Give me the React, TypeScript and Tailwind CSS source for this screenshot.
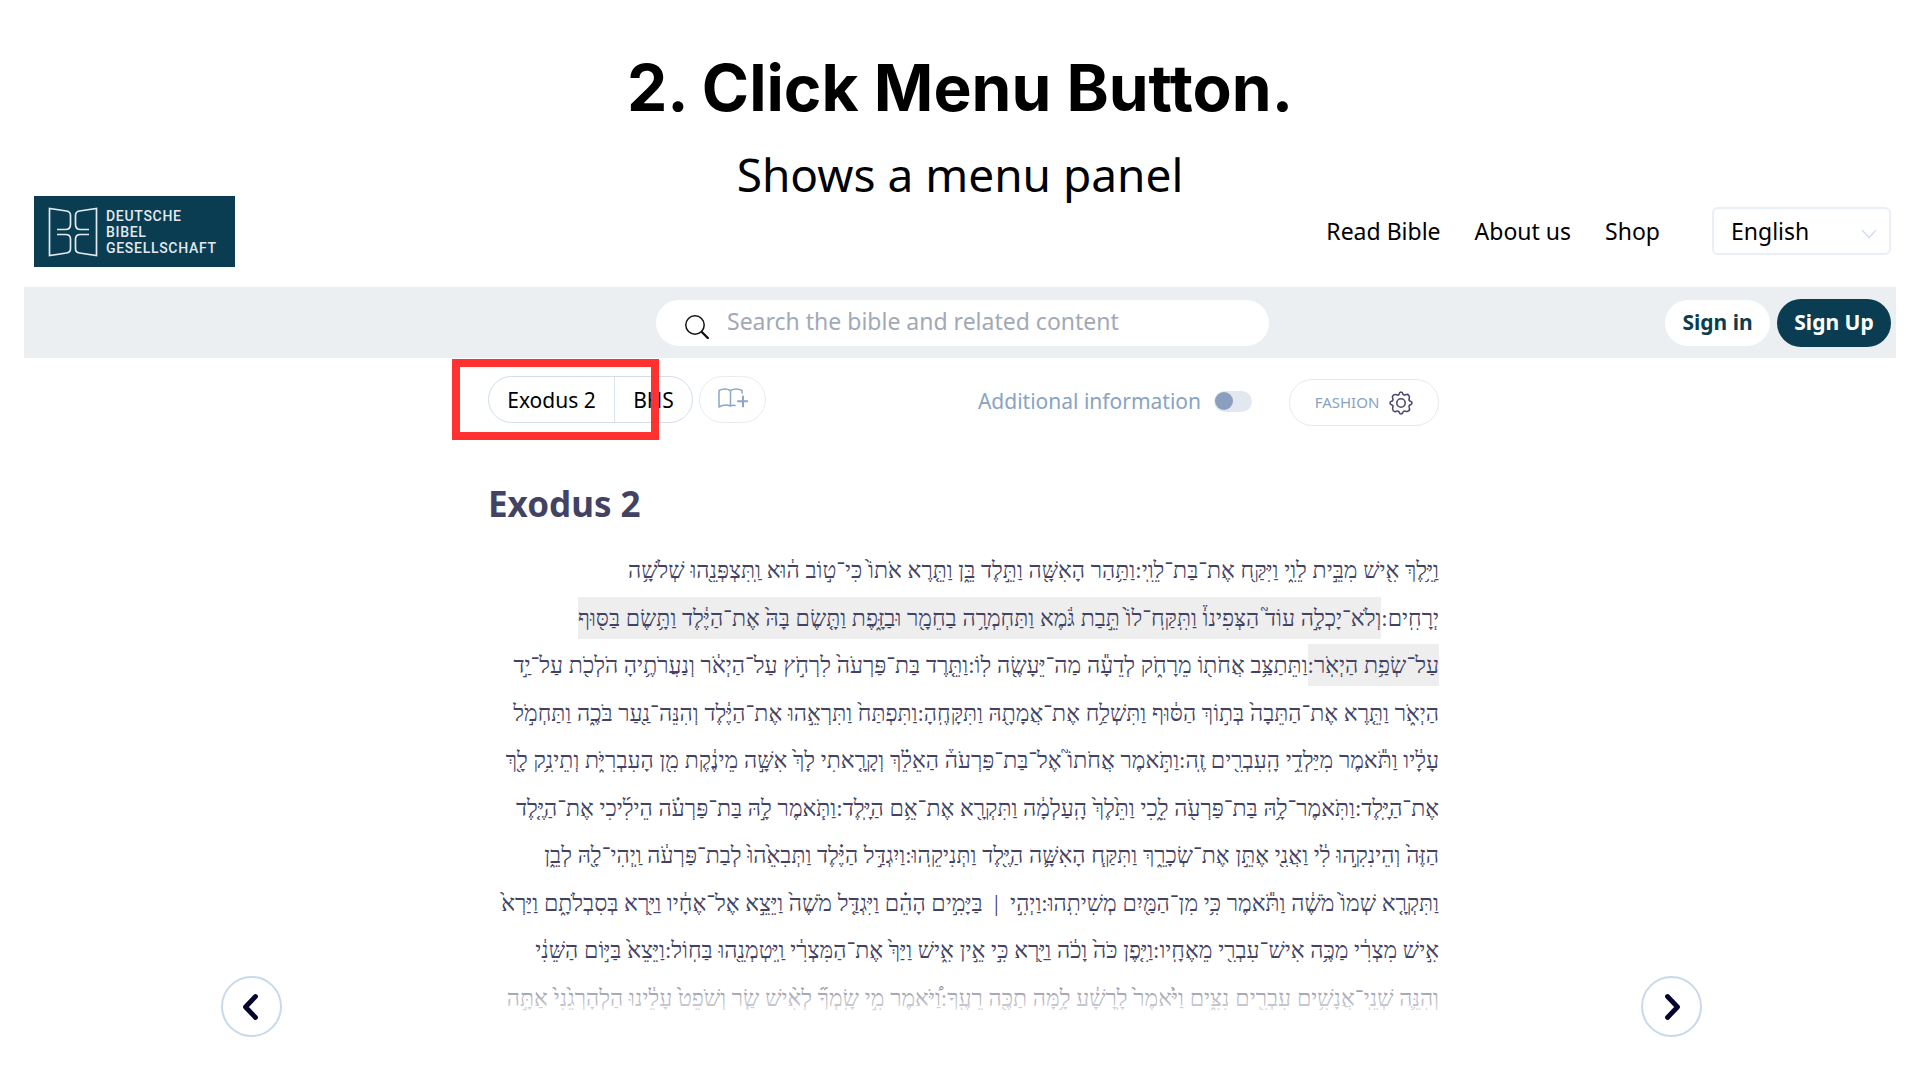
import React from "react";

type Segment = { text: string; marked?: boolean };

const lines: Segment[][] = [
  [{ text: "וַיֵּ֥לֶךְ אִ֖ישׁ מִבֵּ֣ית לֵוִ֑י וַיִּקַּ֖ח אֶת־בַּת־לֵוִֽי:וַתַּ֥הַר הָאִשָּׁ֖ה וַתֵּ֣לֶד בֵּ֑ן וַתֵּ֤רֶא אֹתוֹ֙ כִּי־ט֣וֹב ה֔וּא וַֽתִּצְפְּנֵ֖הוּ שְׁלֹשָׁ֥ה" }],
  [
    { text: "יְרָחִֽים:" },
    { text: "וְלֹא־יָכְלָ֣ה עוֹד֮ הַצְּפִינוֹ֒ וַתִּֽקַּֽח־לוֹ֙ תֵּ֣בַת גֹּ֔מֶא וַתַּחְמְרָ֥ה בַחֵמָ֖ר וּבַזָּ֑פֶת וַתָּ֤שֶׂם בָּהּ֙ אֶת־הַיֶּ֔לֶד וַתָּ֥שֶׂם בַּסּ֖וּף", marked: true },
  ],
  [
    { text: "עַל־שְׂפַ֥ת הַיְאֹֽר:", marked: true },
    { text: "וַתֵּתַצַּ֥ב אֲחֹת֖וֹ מֵרָחֹ֑ק לְדֵעָ֕ה מַה־יֵּעָשֶׂ֖ה לֽוֹ:וַתֵּ֤רֶד בַּת־פַּרְעֹה֙ לִרְחֹ֣ץ עַל־הַיְאֹ֔ר וְנַעֲרֹתֶ֥יהָ הֹלְכֹ֖ת עַל־יַ֣ד" },
  ],
  [{ text: "הַיְאֹ֑ר וַתֵּ֤רֶא אֶת־הַתֵּבָה֙ בְּת֣וֹךְ הַסּ֔וּף וַתִּשְׁלַ֥ח אֶת־אֲמָתָ֖הּ וַתִּקָּחֶֽהָ:וַתִּפְתַּח֙ וַתִּרְאֵ֣הוּ אֶת־הַיֶּ֔לֶד וְהִנֵּה־נַ֖עַר בֹּכֶ֑ה וַתַּחְמֹ֣ל" }],
  [{ text: "עָלָ֔יו וַתֹּ֕אמֶר מִיַּלְדֵ֥י הָֽעִבְרִ֖ים זֶֽה:וַתֹּ֣אמֶר אֲחֹתוֹ֮ אֶל־בַּת־פַּרְעֹה֒ הַאֵלֵ֗ךְ וְקָרָ֤אתִי לָךְ֙ אִשָּׁ֣ה מֵינֶ֔קֶת מִ֖ן הָעִבְרִיֹּ֑ת וְתֵינִ֥ק לָ֖ךְ" }],
  [{ text: "אֶת־הַיָּֽלֶד:וַתֹּֽאמֶר־לָ֥הּ בַּת־פַּרְעֹ֖ה לֵ֑כִי וַתֵּ֙לֶךְ֙ הָֽעַלְמָ֔ה וַתִּקְרָ֖א אֶת־אֵ֥ם הַיָּֽלֶד:וַתֹּ֧אמֶר לָ֣הּ בַּת־פַּרְעֹ֗ה הֵילִ֜יכִי אֶת־הַיֶּ֤לֶד" }],
  [{ text: "הַזֶּה֙ וְהֵינִקִ֣הוּ לִ֔י וַאֲנִ֖י אֶתֵּ֣ן אֶת־שְׂכָרֵ֑ךְ וַתִּקַּ֧ח הָאִשָּׁ֛ה הַיֶּ֖לֶד וַתְּנִיקֵֽהוּ:וַיִגְדַּ֣ל הַיֶּ֗לֶד וַתְּבִאֵ֙הוּ֙ לְבַת־פַּרְעֹ֔ה וַֽיְהִי־לָ֖הּ לְבֵ֑ן" }],
  [{ text: "וַתִּקְרָ֤א שְׁמוֹ֙ מֹשֶׁ֔ה וַתֹּ֕אמֶר כִּ֥י מִן־הַמַּ֖יִם מְשִׁיתִֽהוּ:וַיְהִ֣י\u00a0 |\u00a0 בַּיָּמִ֣ים הָהֵ֗ם וַיִּגְדַּ֤ל מֹשֶׁה֙ וַיֵּצֵ֣א אֶל־אֶחָ֔יו וַיַּ֖רְא בְּסִבְלֹתָ֑ם וַיַּרְא֙" }],
  [{ text: "אִ֣ישׁ מִצְרִ֔י מַכֶּ֥ה אִישׁ־עִבְרִ֖י מֵאֶחָֽיו:וַיִּ֤פֶן כֹּה֙ וָכֹ֔ה וַיַּ֖רְא כִּ֣י אֵ֣ין אִ֑ישׁ וַיַּךְ֙ אֶת־הַמִּצְרִ֔י וַֽיִּטְמְנֵ֖הוּ בַּחֽוֹל:וַיֵּצֵא֙ בַּיּ֣וֹם הַשֵּׁנִ֔י" }],
  [{ text: "וְהִנֵּ֛ה שְׁנֵֽי־אֲנָשִׁ֥ים עִבְרִ֖ים נִצִּ֑ים וַיֹּ֙אמֶר֙ לָֽרָשָׁ֔ע לָ֥מָּה תַכֶּ֖ה רֵעֶֽךָ:וַ֠יֹּאמֶר מִ֣י שָֽׂמְךָ֞ לְאִ֨ישׁ שַׂ֤ר וְשֹׁפֵט֙ עָלֵ֔ינוּ הַלְהָרְגֵ֙נִי֙ אַתָּ֣ה" }],
];

function Logo() {
  return (
    <a href="#home" aria-label="Deutsche Bibel Gesellschaft" className="mt-px flex h-[71px] w-[201px] items-center gap-2 bg-[#0a3d52] pl-[14px]">
      <svg viewBox="0 0 50 50" className="h-[50px] w-[50px] shrink-0" fill="none" stroke="#e2eaed" strokeWidth="1.7">
        <path d="M9 22.5h8.500q5 0 5-5V8.500q0-4-4-4.500L1.500 1.500v47L18.500 46q4-.5 4-4.500V32q0-4.500-5-4.500H9" />
        <path d="M41 22.500h-8.500q-5 0-5-5V8.500q0-4 4-4.500L48.500 1.500v47L31.500 46q-4-.5-4-4.500V32q0-4.500 5-4.500H41" />
      </svg>
      <span className="font-['Roboto'] text-[14px] leading-4 font-medium tracking-wider text-[#e2eaed]">
        DEUTSCHE<br />BIBEL<br />GESELLSCHAFT
      </span>
    </a>
  );
}

function SearchIcon() {
  return (
    <svg viewBox="0 0 24 24" className="h-6 w-6 shrink-0" fill="none" stroke="#111" strokeLinecap="round">
      <circle cx="10" cy="10" r="9.200" strokeWidth="1.500" />
      <path d="M16.800 17l6 6" strokeWidth="2.400" />
    </svg>
  );
}

function BookPlusIcon() {
  return (
    <svg viewBox="0 0 30 20" className="h-5 w-[30px]" fill="none" stroke="#8ba6c6" strokeWidth="1.500" strokeLinecap="round" strokeLinejoin="round">
      <path d="M12.500 2.500Q7 -.5 1 2.500V19Q7 15.500 12.500 18Q15 17 17 17.500M12.500 2.500Q18 -.5 24 2.500V5M12.500 2.500V18" />
      <path d="M25 8.500v10M20 13.300h9.500" strokeWidth="2" />
    </svg>
  );
}

function GearIcon() {
  return (
    <svg viewBox="0 0 24 24" className="h-6 w-6" fill="none" stroke="#4d4b6b" strokeWidth="1.600" strokeLinejoin="round">
      <circle cx="12" cy="12" r="4.200" />
      <path d="M10 3.300Q10.500 1 12 1T14 3.300Q15 4.500 16.500 3.800Q18.500 2.800 19.700 4.200T20.200 7.500Q19.500 9.300 21 10Q23 10.500 23 12T20.800 14Q19.500 15 20.200 16.500Q21.200 18.500 19.800 19.700T16.500 20.200Q14.700 19.500 14 21Q13.500 23 12 23T10 20.800Q9 19.500 7.500 20.200Q5.500 21.200 4.300 19.800T3.800 16.500Q4.500 14.700 3 14Q1 13.500 1 12T3.200 10Q4.500 9 3.800 7.500Q2.800 5.500 4.200 4.300T7.500 3.800Q9.300 4.500 10 3.300Z" />
    </svg>
  );
}

function PageButton({ label, path }: { label: string; path: string }) {
  return (
    <button aria-label={label} className="flex h-[61px] w-[61px] shrink-0 items-center justify-center rounded-full border-2 border-[#c9d9ec] bg-white">
      <svg viewBox="0 0 28 28" className="h-7 w-7" fill="none" stroke="#04042f" strokeWidth="4.800" strokeLinecap="round" strokeLinejoin="round">
        <path d={path} />
      </svg>
    </button>
  );
}

export default function App() {
  return (
    <div className="min-h-screen bg-white px-6 font-['Noto_Sans',sans-serif] text-black">
      <div className="flex h-[195px] flex-col items-center pt-[50px]">
        <h1 className="font-['Inter'] text-[64px] leading-[76px] font-bold whitespace-nowrap">2. Click Menu Button.</h1>
        <p className="mt-4 text-[46px] leading-[64px] whitespace-nowrap">Shows a menu panel</p>
      </div>

      <header className="flex h-[92px] items-start justify-between pr-[5px] pl-[10px]">
        <Logo />
        <div className="flex items-center pt-3">
          <nav className="mr-[52px] flex gap-[34px] text-[23px] leading-[48px]">
            <a href="#read">Read Bible</a>
            <a href="#about">About us</a>
            <a href="#shop">Shop</a>
          </nav>
          <div className="relative">
            <select aria-label="Language" defaultValue="English" className="h-12 w-[179px] appearance-none rounded-md border-2 border-[#eaeff6] bg-white pl-[17px] text-[23px]">
              <option>English</option>
            </select>
            <svg viewBox="0 0 16 10" className="pointer-events-none absolute top-[22px] right-[14px] h-[10px] w-4" fill="none" stroke="#d3e0ee" strokeWidth="1.600">
              <path d="M1 1l7 7.500L15 1" />
            </svg>
          </div>
        </div>
      </header>

      <div className="grid h-[71px] grid-cols-[1fr_613px_1fr] items-center bg-[#ebeff2] pl-[5px]">
        <div />
        <label className="flex h-[46px] items-center gap-[18px] rounded-full bg-white pl-[29px]">
          <span className="pt-2"><SearchIcon /></span>
          <input type="search" aria-label="Search" placeholder="Search the bible and related content" className="min-w-0 flex-1 bg-transparent pb-[2px] text-[23px] outline-none placeholder:text-[#a2a9b6]" />
        </label>
        <div className="flex items-center justify-end gap-[7px] pr-[5px] text-[21px] font-bold">
          <button className="h-[46px] w-[105px] rounded-full bg-white text-[#0a3d52]">Sign in</button>
          <button className="h-12 w-[114px] rounded-full bg-[#0a3d52] text-white">Sign Up</button>
        </div>
      </div>

      <div className="flex items-end justify-between pr-[194px] pl-[197px]">
        <PageButton label="Previous chapter" path="M17.500 3.500L7.500 14L17.500 24.500" />
        <main className="ml-1 w-[951px]">
          <div className="flex h-[102px] items-start justify-between pt-[18px]">
            <div className="flex gap-[6px]">
              <div className="relative flex h-[47px] w-[205px] rounded-full border border-[#d3deea] text-[21px]">
                <button className="w-[126px] border-r border-[#dbe4ee] pt-[2px]">Exodus 2</button>
                <button className="flex-1 pt-[2px]">BHS</button>
                <div className="pointer-events-none absolute -top-[18px] -left-[37px] h-[81px] w-[207px] border-8 border-[#ff3131]" />
              </div>
              <button aria-label="Add parallel translation" className="flex h-[47px] w-[67px] items-center justify-center rounded-full border border-[#e9ebef] pb-1">
                <BookPlusIcon />
              </button>
            </div>
            <div className="flex items-center pt-[3px]">
              <label htmlFor="extra" className="pb-[2px] text-[21px] whitespace-nowrap text-[#89a3c2]">Additional information</label>
              <span className="relative mb-[3px] ml-[13px] flex h-[21px] w-[38px] items-center">
                <input id="extra" type="checkbox" role="switch" className="h-[21px] w-[38px] appearance-none rounded-full bg-[#e3e8f0]" />
                <span className="pointer-events-none absolute left-[1px] h-[18px] w-[18px] rounded-full bg-[#899fbd]" />
              </span>
              <button className="ml-[37px] flex h-[47px] w-[150px] items-center justify-center gap-[10px] rounded-full border border-[#e7e8ea] text-[15px] text-[#89a3c2]">
                FASHION
                <GearIcon />
              </button>
            </div>
          </div>

          <h2 className="mt-5 text-[35px] leading-[48px] font-bold text-[#434262]">Exodus 2</h2>

          <div className="relative mt-[21px]">
            <div dir="rtl" lang="he" className="flex h-[470px] flex-col justify-between font-['Liberation_Serif','DejaVu_Sans',serif] text-[23px] leading-[44px] whitespace-nowrap text-[#434262]">
              {lines.map((segments, i) => (
                <p key={i} className="flex h-[42px]">
                  {segments.map((s, j) => (
                    <span key={j} className={s.marked ? "block h-[42px] bg-[#eeeeee]" : "block h-[42px]"}>{s.text}</span>
                  ))}
                </p>
              ))}
            </div>
            <div className="pointer-events-none absolute inset-x-0 bottom-0 h-[42px] bg-linear-to-b from-white/30 to-white/90" />
          </div>
          <div className="h-[18px]" />
        </main>
        <PageButton label="Next chapter" path="M9.500 3.500L19.500 14L9.500 24.500" />
      </div>
    </div>
  );
}
